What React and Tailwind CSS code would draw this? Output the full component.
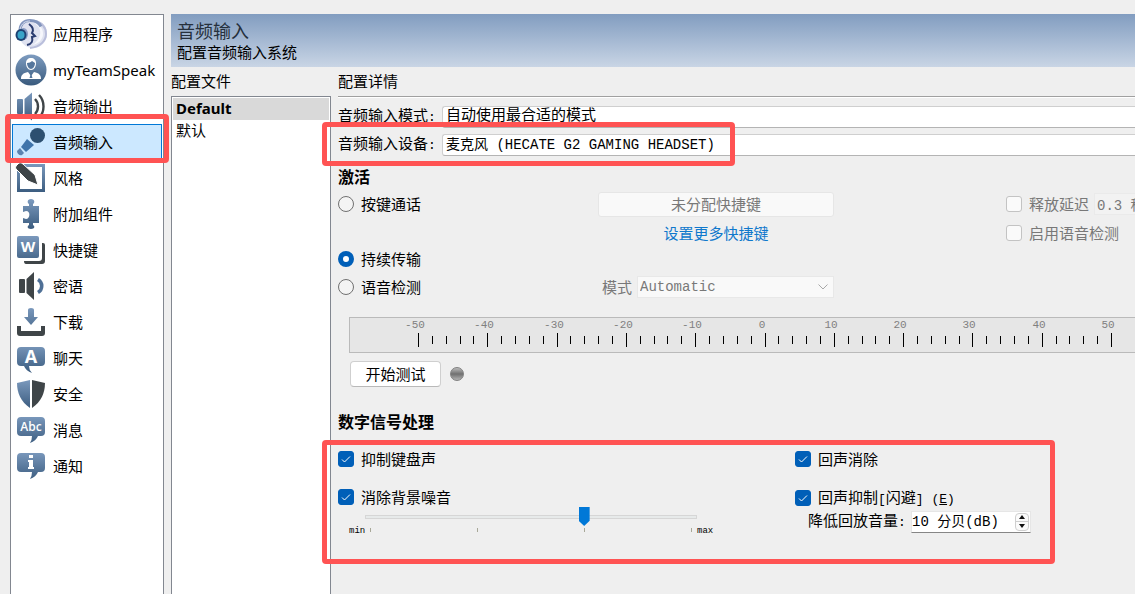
import React, { useState } from "react";

const BLUE = "url(#iconBlue)";
const DARK = "#3f4548";

const AppIcon = () => (
  <>
    <circle cx="18" cy="16" r="14" fill="#dfe2f0" />
    <path d="M20 3c8 2 11 7 11 13S26 29 15 30" fill="none" stroke="#b9bedb" strokeWidth="2" />
    <path d="M19 5c5 3 7 7 6 12-1 4-4 8-8 10 6-1 11-5 11-11S25 7 19 5z" fill="#f6f7fc" />
    <path d="M14 6c4 3 5 6 3 9l3 3-3 1c1 4 0 7-5 8" fill="none" stroke="#2a3c70" strokeWidth="2" />
    <path d="M5 13C5 6 9 2.500 15 2.500c5 0 9 2 11 6" fill="none" stroke="#8295bd" strokeWidth="3" />
    <path d="M5 11C7 5 10 3 15 3" fill="none" stroke="#d5dcee" strokeWidth="1" />
    <ellipse cx="8.500" cy="16" rx="4.500" ry="6" fill="#8b9cc4" />
    <ellipse cx="6" cy="17" rx="5.500" ry="6" fill="#1d4272" />
    <ellipse cx="6" cy="17" rx="3.500" ry="4" fill="#39a4c8" />
  </>
);

const AccountIcon = () => (
  <>
    <circle cx="16" cy="16" r="15.500" fill={BLUE} />
    <path d="M11 9c0-3 2-5 5-5s5 2 5 5c0 4-2 7-5 7s-5-3-5-7z" fill="#fff" />
    <path d="M12 9c2 0 4-1 5-2l3 2c0 3-2 6-4 6s-4-3-4-6z" fill="#56779d" />
    <path d="M6 25c0-4 2-6 7-7l3 4 3-4c5 1 7 3 7 7z" fill="#fff" />
    <path d="M16 19l1.500 5h-3z" fill="#56779d" />
  </>
);

const OutputIcon = () => (
  <>
    <rect x="2" y="9" width="6" height="15" rx="1" fill={BLUE} />
    <path d="M9.500 9l7.500-6.500v28L9.500 24z" fill={BLUE} />
    <path d="M20 9c4 4 4 11 0 15M24 5c6 6 6 17 0 23" fill="none" stroke={DARK} strokeWidth="2.400" />
  </>
);

const InputIcon = () => (
  <>
    <circle cx="22.500" cy="9.500" r="7.500" fill="#2d5070" />
    <path d="M12 13l7 6-8 7-5-5z" fill="#3f74aa" />
    <path d="M5 22l4 5-2 2c-2 1-5-1-5-4z" fill="#5c83b0" />
  </>
);

const StyleIcon = () => (
  <>
    <path d="M3.500 3.500h25v25h-25z" fill="#fff" stroke={BLUE} strokeWidth="3" />
    <path d="M1 4l3-3q2-1 4 1l12 11 3 10-10-4L1 7q-1-1 0-3z" fill={DARK} stroke="#fff" strokeWidth="1" />
  </>
);

const AddonIcon = () => (
  <path
    d="M8 8h6V6c-2-1-2-5 2-5s4 4 2 5v2h6v17h-6v2c2 1 2 4-2 4s-4-3-2-4v-2H8v-5l3 1c4 0 5-8 0-8l-3 1z"
    fill={BLUE}
  />
);

const HotkeyIcon = () => (
  <>
    <path d="M27 9h1q2 0 2 2v16q0 3-3 3H11q-2 0-2-3h15q3 0 3-3z" fill={DARK} />
    <rect x="2" y="2" width="22" height="22" rx="2" fill={BLUE} />
    <text x="13" y="18" textAnchor="middle" fontSize="15" fontWeight="bold" fill="#fff">W</text>
  </>
);

const WhisperIcon = () => (
  <>
    <rect x="4" y="9" width="6" height="14" rx="1" fill={DARK} />
    <path d="M11.500 9L19 2v28l-7.500-7z" fill={DARK} />
    <path d="M23 9.500c5 3 5 10 0 13" fill="none" stroke="#4f7096" strokeWidth="3.500" />
  </>
);

const DownloadIcon = () => (
  <>
    <path d="M13 4q0-2 3-2t3 2v7h4l-7 8-7-8h4z" fill={BLUE} />
    <path d="M2 20h4v5h20v-5h4v7q0 3-3 3H5q-3 0-3-3z" fill={DARK} />
  </>
);

const ChatIcon = () => (
  <>
    <path d="M6 5h20q4 0 4 4v11q0 4-4 4H14q0 4 3 7-6-2-8-7H6q-4 0-4-4V9q0-4 4-4z" fill={BLUE} />
    <text x="16" y="21" textAnchor="middle" fontSize="18" fontWeight="bold" fill="#fff">A</text>
  </>
);

const SecurityIcon = () => (
  <>
    <path d="M2 5l13-3v28C6 24 2 15 2 5z" fill={BLUE} />
    <path d="M30 5L17 2v28c9-6 13-15 13-25z" fill={DARK} />
  </>
);

const MessageIcon = () => (
  <>
    <path d="M6 3h20q4 0 4 4v11q0 4-4 4h-3q-2 5-8 7 2-3 2-7H6q-4 0-4-4V7q0-4 4-4z" fill={BLUE} />
    <text x="16" y="17" textAnchor="middle" fontSize="12" fontWeight="600" fill="#fff">Abc</text>
  </>
);

const NotifyIcon = () => (
  <>
    <path d="M6 3h20q4 0 4 4v11q0 4-4 4h-3q-2 5-8 7 2-3 2-7H6q-4 0-4-4V7q0-4 4-4z" fill={BLUE} />
    <path d="M14 5h4v3h-4zM13 10h5v7h1v2h-6v-2h1v-5h-1z" fill="#fff" />
  </>
);

const pages = [
  { name: "应用程序", Icon: AppIcon },
  { name: "myTeamSpeak", Icon: AccountIcon },
  { name: "音频输出", Icon: OutputIcon },
  { name: "音频输入", Icon: InputIcon, marked: true },
  { name: "风格", Icon: StyleIcon },
  { name: "附加组件", Icon: AddonIcon },
  { name: "快捷键", Icon: HotkeyIcon },
  { name: "密语", Icon: WhisperIcon },
  { name: "下载", Icon: DownloadIcon },
  { name: "聊天", Icon: ChatIcon },
  { name: "安全", Icon: SecurityIcon },
  { name: "消息", Icon: MessageIcon },
  { name: "通知", Icon: NotifyIcon },
];

// red frame drawn over the part it marks
const Mark = ({ className }) => (
  <div
    className={`absolute z-10 rounded-sm border-[5px] border-[#ff5353] pointer-events-none ${className}`}
  ></div>
);

const Sidebar = () => {
  const [current, setCurrent] = useState("音频输入");

  return (
    <nav className="w-[154px] shrink-0 border border-b-0 border-[#828790] bg-white p-px">
      {/* shared gradient for the icons */}
      <svg className="absolute w-0 h-0" aria-hidden="true">
        <defs>
          <linearGradient id="iconBlue" x1="0" y1="0" x2="0" y2="32" gradientUnits="userSpaceOnUse">
            <stop offset="0" stopColor="#7f9dc1" />
            <stop offset="1" stopColor="#38597c" />
          </linearGradient>
        </defs>
      </svg>
      <ul>
        {pages.map(({ name, Icon, marked }) => (
          <li key={name} className="relative">
            <button
              type="button"
              onClick={() => setCurrent(name)}
              className={`flex items-center gap-1.5 w-full h-9 pl-0.5 border whitespace-nowrap ${
                current === name ? "bg-[#cce8ff] border-[#0078d7]" : "border-transparent"
              }`}
            >
              <svg
                viewBox="0 0 32 32"
                className="w-8 h-8 shrink-0 font-['Open_Sans',sans-serif]"
                aria-hidden="true"
              >
                <Icon />
              </svg>
              <span className="font-['Noto_Sans','Noto_Sans_CJK_SC',sans-serif]">{name}</span>
            </button>
            {marked && <Mark className="-left-[7px] -right-[7px] -top-2.5 -bottom-[3px]" />}
          </li>
        ))}
      </ul>
    </nav>
  );
};

const Latin = ({ children }) => (
  <span className="text-[13px] font-['Liberation_Mono',monospace]">{children}</span>
);

const Check = ({ id, children, checked, disabled }) => (
  <label
    htmlFor={id}
    className={`flex items-center gap-[7px] h-5 whitespace-nowrap ${disabled ? "text-[#787878]" : ""}`}
  >
    <span className="relative flex w-4 h-4 shrink-0">
      <input
        id={id}
        type="checkbox"
        defaultChecked={checked}
        disabled={disabled}
        className="peer appearance-none w-4 h-4 rounded-[3px] border border-[#8a8a8a] bg-white checked:bg-[#005fb8] checked:border-[#005fb8] disabled:bg-[#fafafa] disabled:border-[#c3c3c3]"
      />
      <svg
        viewBox="0 0 16 16"
        className="absolute inset-0 w-4 h-4 hidden peer-checked:block pointer-events-none"
      >
        <path d="M4 8.500l2.500 2.500L12 5.500" fill="none" stroke="#fff" strokeWidth="1" />
      </svg>
    </span>
    <span>{children}</span>
  </label>
);

const Radio = ({ value, mode, setMode, children }) => (
  <label className="flex items-center gap-[7px] whitespace-nowrap">
    <input
      type="radio"
      name="activation"
      checked={mode === value}
      onChange={() => setMode(value)}
      className="appearance-none w-4 h-4 shrink-0 rounded-full border border-[#707070] bg-[#f4f4f4] checked:border-[5px] checked:border-[#005fb8] checked:bg-white"
    />
    {children}
  </label>
);

const Meter = () => {
  const ticks = [];
  for (let i = 0; i <= 50; i++) {
    ticks.push({ x: Math.round(69 + i * 13.86), major: i % 5 === 0, db: i * 2 - 50 });
  }

  return (
    <div className="ml-[11px] mt-[22px] h-9 border border-r-0 border-[#bababa] bg-[#e6e6e6] overflow-hidden">
      <svg
        className="h-[34px] w-full font-['Liberation_Mono',monospace]"
        role="img"
        aria-label="dB"
      >
        {ticks.map((t) => (
          <g key={t.db}>
            <rect x={t.x - 1} y={t.major ? 15 : 18} width="1" height={t.major ? 14 : 8} fill="#000" />
            {t.major && (
              <text x={t.x - 4} y="10" textAnchor="middle" fontSize="11" fill="#808080">
                {t.db}
              </text>
            )}
          </g>
        ))}
      </svg>
    </div>
  );
};

const selectClass =
  "appearance-none flex-1 min-w-0 h-[22px] pl-[3px] rounded-l-[3px] border border-r-0 border-[#cfcfcf] border-b-[#b4b4b4] bg-white font-['Liberation_Mono','Noto_Sans_CJK_SC',monospace]";

const App = () => {
  const [mode, setMode] = useState("continuous");
  const [volume, setVolume] = useState(10);

  return (
    <div className="flex min-h-screen w-full overflow-hidden bg-[#efefef] pt-3.5 pl-2.5 text-[15px] leading-5 text-black font-['Noto_Sans_CJK_SC',sans-serif]">
      <Sidebar />

      <main className="flex flex-col flex-1 min-w-0 ml-[7px]">
        <header className="h-[53px] pl-1.5 pt-[5px] bg-linear-to-b from-[#829dc0] to-[#c9d5e5]">
          <h1 className="text-[18px] leading-[23px] text-[#26303c]">音频输入</h1>
          <p className="leading-5">配置音频输入系统</p>
        </header>

        <div className="flex flex-1">
          <section className="flex flex-col w-40 shrink-0">
            <h2 className="h-[29px] leading-[27px]">配置文件</h2>
            <ul className="flex-1 border border-b-0 border-[#828790] bg-white p-px">
              <li className="h-[22px] leading-5 pl-[3px] bg-[#d9d9d9] font-bold font-['Noto_Sans',sans-serif]">
                Default
              </li>
              <li className="h-[22px] leading-5 pl-[3px]">默认</li>
            </ul>
          </section>

          <section className="flex-1 min-w-0 ml-[7px]">
            <h2 className="h-[29px] leading-[27px]">配置详情</h2>
            <div className="h-0.5 border-t border-[#a0a0a0] bg-white"></div>

            <div className="flex flex-col gap-[5px] mt-[7px]">
              <div className="flex items-center">
                <label htmlFor="inputMode" className="w-[104px] whitespace-nowrap">
                  音频输入模式<Latin>:</Latin>
                </label>
                <select id="inputMode" className={`${selectClass} text-[15px]`}>
                  <option>自动使用最合适的模式</option>
                </select>
              </div>
              <div className="relative flex items-center">
                <label htmlFor="inputDevice" className="w-[104px] whitespace-nowrap">
                  音频输入设备<Latin>:</Latin>
                </label>
                <select id="inputDevice" className={`${selectClass} text-[14px]`}>
                  <option>麦克风 (HECATE G2 GAMING HEADSET)</option>
                </select>
                <Mark className="-left-4 -top-[11px] -bottom-2.5 w-[413px]" />
              </div>
            </div>

            <h3 className="mt-2 h-6 leading-6 text-base font-bold">激活</h3>

            <div className="grid grid-cols-[260px_236px_1fr] grid-rows-[26px_24px_20px_22px] items-center gap-y-1 mt-[3px]">
              <Radio value="ptt" mode={mode} setMode={setMode}>按键通话</Radio>
              <button
                type="button"
                disabled
                className="h-[25px] rounded-[3px] border border-[#e6e6e6] bg-[#f9f9f9] text-[#787878]"
              >
                未分配快捷键
              </button>
              <div className="flex items-center gap-[5px] ml-[172px]">
                <Check id="releaseDelay" disabled>释放延迟</Check>
                <input
                  type="text"
                  aria-label="释放延迟"
                  disabled
                  defaultValue="0.3 秒"
                  className="w-20 h-[22px] shrink-0 pl-0.5 border border-[#eaeaea] bg-[#f2f2f2] text-[14px] text-[#787878] font-['Liberation_Mono','Noto_Sans_CJK_SC',monospace]"
                />
              </div>

              <a href="#hotkeys" className="col-start-2 text-center text-[#0f78cc]">
                设置更多快捷键
              </a>
              <div className="ml-[172px]">
                <Check id="voiceCheck" disabled>启用语音检测</Check>
              </div>

              <Radio value="continuous" mode={mode} setMode={setMode}>持续传输</Radio>

              <div className="col-start-1 mt-1.5">
                <Radio value="vad" mode={mode} setMode={setMode}>语音检测</Radio>
              </div>
              <div className="flex items-center mt-1.5 pl-1 text-[#787878]">
                <label htmlFor="vadMode" className="w-[35px] whitespace-nowrap">模式</label>
                <div className="relative flex-1">
                  <select
                    id="vadMode"
                    disabled
                    className="appearance-none block w-full h-[22px] pl-0.5 border border-[#e8e8e8] bg-[#f9f9f9] text-[14px] font-['Liberation_Mono',monospace]"
                  >
                    <option>Automatic</option>
                  </select>
                  <svg viewBox="0 0 10 6" className="absolute right-1.5 top-2 w-2.5 h-1.5 pointer-events-none">
                    <path d="M.5.5L5 5 9.500.5" fill="none" stroke="#a8a8a8" />
                  </svg>
                </div>
              </div>
            </div>

            <Meter />

            <div className="flex items-center gap-[9px] mt-2 ml-3">
              <button
                type="button"
                className="w-[91px] h-[26px] rounded-[4px] border border-[#cfcfcf] border-b-[#b9b9b9] bg-white"
              >
                开始测试
              </button>
              <span className="w-3.5 h-3.5 rounded-full border border-[#808080] bg-linear-to-b from-[#bcbcbc] via-[#707070] to-[#b4b4b4]"></span>
            </div>

            <h3 className="mt-[22px] h-6 leading-6 text-base font-bold">数字信号处理</h3>

            <div className="relative grid grid-cols-[457px_1fr] w-[717px] pt-4 pb-[27px]">
              <div className="flex flex-col">
                <Check id="typing" checked>抑制键盘声</Check>
                <div className="mt-[18px]">
                  <Check id="noise" checked>消除背景噪音</Check>
                </div>
                <div className="flex items-end ml-[11px] h-[30px] text-[9px] leading-3 font-['Liberation_Mono',monospace]">
                  <span className="w-4">min</span>
                  <div className="w-[332px] h-full">
                    <input
                      type="range"
                      min="0"
                      max="3"
                      defaultValue="2"
                      aria-label="消除背景噪音"
                      className="appearance-none block w-full h-5 bg-transparent [&::-webkit-slider-runnable-track]:h-1 [&::-webkit-slider-runnable-track]:border [&::-webkit-slider-runnable-track]:border-[#d6d6d6] [&::-webkit-slider-runnable-track]:bg-[#e7eaea] [&::-webkit-slider-thumb]:appearance-none [&::-webkit-slider-thumb]:w-[11px] [&::-webkit-slider-thumb]:h-[19px] [&::-webkit-slider-thumb]:-mt-[9px] [&::-webkit-slider-thumb]:bg-[#0078d7] [&::-webkit-slider-thumb]:[clip-path:polygon(0_0,100%_0,100%_72%,50%_100%,0_72%)]"
                    />
                    <div className="flex justify-between mx-[5px] mt-px">
                      <i className="w-px h-1 bg-[#a8a898]"></i>
                      <i className="w-px h-1 bg-[#a8a898]"></i>
                      <i className="w-px h-1 bg-[#a8a898]"></i>
                      <i className="w-px h-1 bg-[#a8a898]"></i>
                    </div>
                  </div>
                  <span>max</span>
                </div>
              </div>

              <div className="flex flex-col">
                <Check id="echo" checked>回声消除</Check>
                <div className="mt-[19px]">
                  <Check id="ducking" checked>
                    回声抑制<Latin>[</Latin>闪避<Latin>] (<u>E</u>)</Latin>
                  </Check>
                </div>
                <div className="flex items-center mt-0.5 ml-[13px]">
                  <label htmlFor="volume" className="w-[103px] whitespace-nowrap">
                    降低回放音量<Latin>:</Latin>
                  </label>
                  <div className="flex items-center w-[120px] h-[22px] pr-px border border-[#e6e6e6] border-b-[#868686] bg-white">
                    <input
                      id="volume"
                      type="text"
                      readOnly
                      value={`${volume} 分贝(dB)`}
                      className="flex-1 min-w-0 text-[14px] leading-5 font-['Liberation_Mono','Noto_Sans_CJK_SC',monospace]"
                    />
                    <div className="flex flex-col w-3.5 h-[18px] rounded-sm border border-[#cfcfcf] bg-[#fbfbfb]">
                      <button
                        type="button"
                        aria-label="+"
                        onClick={() => setVolume(volume + 1)}
                        className="flex flex-1 items-center justify-center border-b border-[#cfcfcf]"
                      >
                        <svg viewBox="0 0 6 4" className="w-1.5 h-1">
                          <path d="M0 4l3-4 3 4z" fill="#111" />
                        </svg>
                      </button>
                      <button
                        type="button"
                        aria-label="-"
                        onClick={() => setVolume(volume - 1)}
                        className="flex flex-1 items-center justify-center"
                      >
                        <svg viewBox="0 0 6 4" className="w-1.5 h-1">
                          <path d="M0 0l3 4 3-4z" fill="#111" />
                        </svg>
                      </button>
                    </div>
                  </div>
                </div>
              </div>
              <Mark className="-left-4 right-0 top-[7px] bottom-0" />
            </div>
          </section>
        </div>
      </main>
    </div>
  );
};

export default App;
